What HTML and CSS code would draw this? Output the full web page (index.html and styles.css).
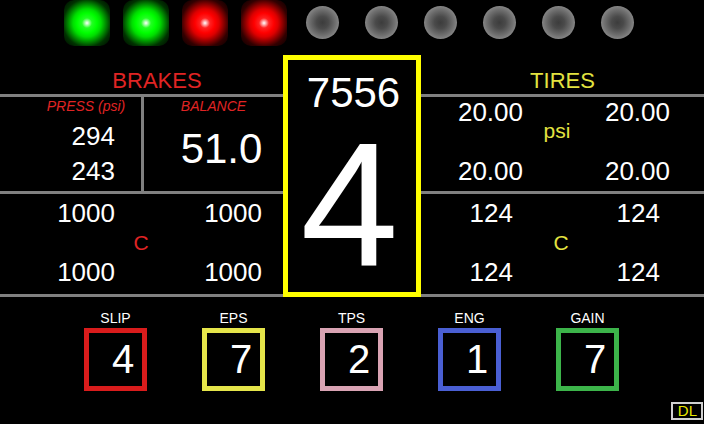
FILE: index.html
```html
<!DOCTYPE html>
<html lang="en">
<head>
    <meta charset="UTF-8">
    <title>Dash</title>
    <link rel="stylesheet" href="styles.css">
</head>
<body>
    <!-- Shift lights -->
    <div class="leds">
        <div class="slot"><div class="led green"></div></div>
        <div class="slot"><div class="led green"></div></div>
        <div class="slot"><div class="led red"></div></div>
        <div class="slot"><div class="led red"></div></div>
        <div class="slot"><div class="led off"></div></div>
        <div class="slot"><div class="led off"></div></div>
        <div class="slot"><div class="led off"></div></div>
        <div class="slot"><div class="led off"></div></div>
        <div class="slot"><div class="led off"></div></div>
        <div class="slot"><div class="led off"></div></div>
    </div>

    <div class="main">
        <!-- Brakes -->
        <div class="side brakes">
            <div class="head brakes-head">BRAKES</div>
            <div class="row1 brake-row">
                <div class="press">
                    <div class="label">PRESS (psi)</div>
                    <div class="num press-a">294</div>
                    <div class="num press-b">243</div>
                </div>
                <div class="balance">
                    <div class="label">BALANCE</div>
                    <div class="bal-value">51.0</div>
                </div>
            </div>
            <div class="row2 temps brake-temps">
                <div class="num">1000</div>
                <div class="unit red-unit">C</div>
                <div class="num">1000</div>
                <div class="num">1000</div>
                <div class="num">1000</div>
            </div>
        </div>

        <!-- Gear -->
        <div class="gear">
            <div class="rpm">7556</div>
            <div class="gear-num">4</div>
        </div>

        <!-- Tires -->
        <div class="side tires">
            <div class="head tires-head">TIRES</div>
            <div class="row1 temps tire-press">
                <div class="num">20.00</div>
                <div class="unit psi">psi</div>
                <div class="num">20.00</div>
                <div class="num">20.00</div>
                <div class="num">20.00</div>
            </div>
            <div class="row2 temps tire-temps">
                <div class="num">124</div>
                <div class="unit yellow-unit">C</div>
                <div class="num">124</div>
                <div class="num">124</div>
                <div class="num">124</div>
            </div>
        </div>
    </div>

    <div class="bottom">
        <div class="settings">
            <div class="setting">
                <div class="set-label">SLIP</div>
                <div class="set-box slip">4</div>
            </div>
            <div class="setting">
                <div class="set-label">EPS</div>
                <div class="set-box eps">7</div>
            </div>
            <div class="setting">
                <div class="set-label">TPS</div>
                <div class="set-box tps">2</div>
            </div>
            <div class="setting">
                <div class="set-label">ENG</div>
                <div class="set-box eng">1</div>
            </div>
            <div class="setting">
                <div class="set-label">GAIN</div>
                <div class="set-box gain">7</div>
            </div>
        </div>
        <div class="dl">DL</div>
    </div>
</body>
</html>
```

FILE: styles.css
```css
body {
    margin: 0;
    background-color: #000;
    color: #fff;
    font-family: "Liberation Sans", Arial, sans-serif;
    width: 704px;
    height: 424px;
    overflow: hidden;
}

/* Shift lights */
.leds {
    display: flex;
    height: 45px;
    padding-left: 57px;
    margin-bottom: 10px;
}

.slot {
    width: 59px;
    display: flex;
    justify-content: center;
    align-items: center;
}

.led {
    width: 46px;
    height: 46px;
    border-radius: 10px;
}

.led.green {
    background: radial-gradient(circle, #fff 0, #afa 2px, #2f2 5px, #0f0 10px, #0d0 14px, #080 19px, #030 24px, #010 30px);
}

.led.red {
    background: radial-gradient(circle, #fff 0, #faa 2px, #f22 5px, #f00 10px, #d00 14px, #800 19px, #300 24px, #100 30px);
}

.led.off {
    width: 33px;
    height: 33px;
    border-radius: 50%;
    background: radial-gradient(circle, #3c3c3c 0, #4a4a4a 6px, #707070 13px, #858585 16.5px);
}

/* Main area */
.main {
    display: flex;
    height: 242px;
}

.side {
    display: flex;
    flex-direction: column;
}

.brakes {
    width: 283px;
}

.tires {
    flex: 1;
}

.head {
    height: 40px;
    display: flex;
    align-items: flex-end;
    justify-content: center;
    font-size: 22px;
    line-height: 26px;
}

.brakes-head {
    color: #e02424;
    padding-left: 31px;
}

.tires-head {
    color: #e3e340;
}

.row1 {
    height: 95px;
    border-top: 3px solid #808080;
}

.row2 {
    height: 98px;
    border-top: 3px solid #808080;
    border-bottom: 3px solid #808080;
}

.num {
    font-size: 26px;
    line-height: 30px;
    text-align: right;
}

/* Brake pressure + balance */
.brake-row {
    display: flex;
}

.press {
    width: 141px;
    border-right: 3px solid #808080;
    padding-top: 1px;
}

.label {
    color: #e02424;
    font-style: italic;
    font-size: 14px;
    line-height: 16px;
    text-align: center;
}

.press .label {
    padding-left: 31px;
}

.press .num {
    padding-right: 26px;
}

.press-a {
    margin-top: 7px;
}

.press-b {
    margin-top: 5px;
}

.balance {
    flex: 1;
    padding-top: 1px;
}

.bal-value {
    font-size: 42px;
    line-height: 48px;
    text-align: center;
    padding-left: 16px;
    margin-top: 11px;
}

/* Temperature grids */
.temps {
    display: grid;
    grid-template-rows: 30px 30px;
    row-gap: 29px;
    align-content: start;
}

.temps .unit {
    grid-column: 2;
    grid-row: 1 / 3;
    text-align: center;
    font-size: 21px;
    line-height: 24px;
}

.brake-temps {
    grid-template-columns: 115px 52px 95px;
    padding-top: 4px;
}

.tire-temps {
    grid-template-columns: 92px 96px 51px;
    padding-top: 4px;
}

.tire-press {
    grid-template-columns: 102px 68px 79px;
}

.red-unit {
    color: #e02424;
    align-self: start;
    margin-top: 33px;
}

.yellow-unit {
    color: #e3e340;
    align-self: start;
    margin-top: 33px;
}

.psi {
    color: #e3e340;
    align-self: start;
    margin-top: 22px;
}

/* Gear box */
.gear {
    width: 138px;
    box-sizing: border-box;
    border: 5px solid #ffff00;
    text-align: center;
}

.rpm {
    font-size: 42px;
    line-height: 48px;
    padding-top: 9px;
    padding-left: 3px;
}

.gear-num {
    font-size: 176px;
    line-height: 176px;
    padding-right: 5px;
}

/* Bottom settings */
.bottom {
    display: flex;
    height: 127px;
}

.settings {
    display: flex;
    gap: 55px;
    padding-left: 84px;
    padding-top: 13px;
}

.setting {
    width: 63px;
    display: flex;
    flex-direction: column;
    align-items: center;
}

.set-label {
    font-size: 14px;
    line-height: 16px;
    margin-bottom: 2px;
}

.set-box {
    width: 63px;
    height: 63px;
    box-sizing: border-box;
    border: 5px solid;
    font-size: 40px;
    line-height: 53px;
    text-align: center;
    padding-left: 15px;
}

.slip { border-color: #d91c1c; }
.eps { border-color: #e5e54a; }
.tps { border-color: #d9a3b3; }
.eng { border-color: #4a5fd3; }
.gain { border-color: #3cb44a; }

.dl {
    margin-left: auto;
    align-self: flex-end;
    margin-bottom: 4px;
    margin-right: 1px;
    border: 2px solid #d0d0d0;
    color: #e8e800;
    font-size: 15px;
    line-height: 14px;
    padding: 0 4px 0 5px;
}
```
